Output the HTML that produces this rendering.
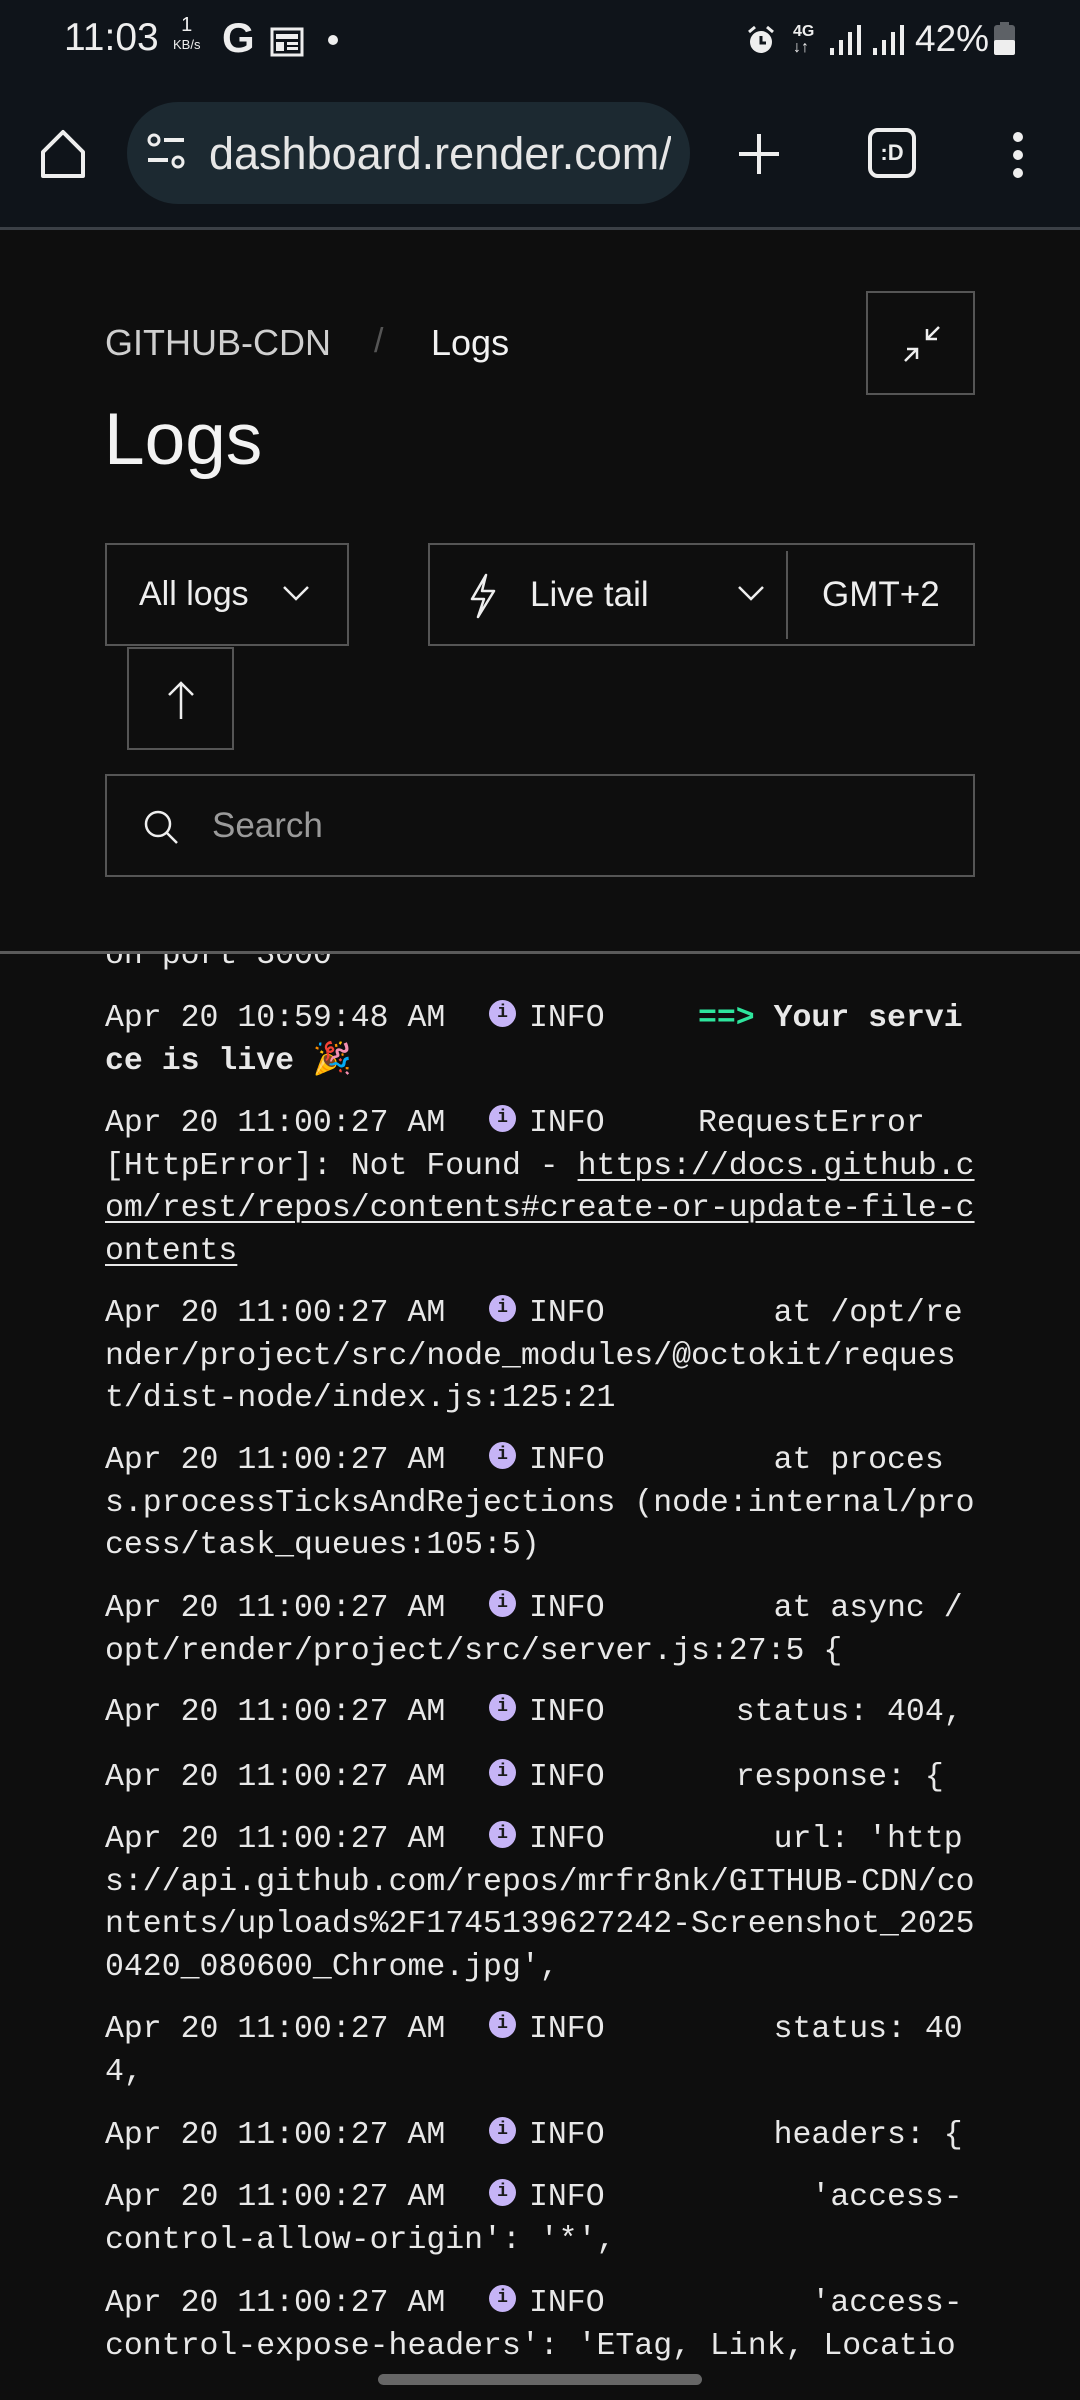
<!DOCTYPE html>
<html><head><meta charset="utf-8"><style>
*{margin:0;padding:0;box-sizing:border-box}
body{width:1080px;height:2400px;background:#0e0e0e;position:relative;overflow:hidden;font-family:"Liberation Sans",sans-serif;color:#eee}
.abs{position:absolute}
#top{position:absolute;left:0;top:0;width:1080px;height:228px;background:#0f141a}
#sep1{position:absolute;left:0;top:227px;width:1080px;height:3px;background:#3b4046}
#hdr{position:absolute;left:0;top:230px;width:1080px;height:722px;background:#0e0e0e;z-index:5}
#sep2{position:absolute;left:0;top:951px;width:1080px;height:3px;background:#5a5a5a;z-index:6}
.box{position:absolute;border:2px solid #555}
.l{position:absolute;font-family:"Liberation Mono",monospace;font-size:31.5px;line-height:42px;white-space:pre;color:#e8e8e8;height:42px}
.i{position:absolute;width:27px;height:27px;border-radius:50%;background:#c6b4f6;color:#1a1a1a;font:bold 18px/27px "Liberation Mono",monospace;text-align:center}
u{text-decoration:underline;text-underline-offset:5px;text-decoration-thickness:2px}
#logs{position:absolute;left:0;top:952px;width:1080px;height:1410px;overflow:hidden}
</style></head><body>
<div id="top">
 <div class="abs" style="left:64px;top:16px;font-size:39px;color:#eee">11:03</div>
 <div class="abs" style="left:173px;top:16px;font-size:20px;color:#eee;text-align:center;line-height:18px">1<br><span style="font-size:13px">KB/s</span></div>
 <div class="abs" style="left:222px;top:14px;font-size:42px;font-weight:bold;color:#eee">G</div>
 <svg class="abs" style="left:270px;top:25px" width="36" height="32"><rect x="2" y="4" width="30" height="26" fill="none" stroke="#eee" stroke-width="3"/><rect x="6" y="9" width="22" height="5" fill="#eee"/><rect x="6" y="17" width="8" height="9" fill="#eee"/><rect x="17" y="17" width="11" height="3" fill="#eee"/><rect x="17" y="22" width="11" height="3" fill="#eee"/></svg>
 <div class="abs" style="left:328px;top:35px;width:10px;height:10px;border-radius:50%;background:#eee"></div>
 <svg class="abs" style="left:746px;top:25px" width="32" height="32"><circle cx="15" cy="17" r="11" fill="#eee"/><path d="M15 11v7h5" stroke="#0f141a" stroke-width="3" fill="none"/><path d="M3 7l6-5M27 7l-6-5" stroke="#eee" stroke-width="3"/></svg>
 <div class="abs" style="left:793px;top:24px;font-size:16px;font-weight:bold;line-height:16px;color:#eee">4G<br>↓↑</div>
 <svg class="abs" style="left:828px;top:24px" width="80" height="32"><g fill="#eee"><rect x="2" y="24" width="4" height="7"/><rect x="11" y="16" width="4" height="15"/><rect x="20" y="8" width="4" height="23"/><rect x="29" y="1" width="4" height="30"/><rect x="45" y="24" width="4" height="7"/><rect x="54" y="16" width="4" height="15"/><rect x="63" y="8" width="4" height="23"/><rect x="72" y="1" width="4" height="30"/></g></svg>
 <div class="abs" style="left:915px;top:18px;font-size:37px;color:#eee">42%</div>
 <svg class="abs" style="left:993px;top:22px" width="24" height="34"><rect x="7" y="0" width="9" height="4" fill="#5d6166"/><rect x="1" y="3" width="21" height="30" rx="3" fill="#5d6166"/><rect x="1" y="18" width="21" height="15" rx="2" fill="#eee"/></svg>
 <svg class="abs" style="left:38px;top:128px" width="50" height="52"><path d="M5 24L25 4l20 20v24H5z" fill="none" stroke="#eee" stroke-width="4" stroke-linejoin="round"/></svg>
 <div class="abs" style="left:127px;top:102px;width:563px;height:102px;border-radius:51px;background:#1c2931"></div>
 <svg class="abs" style="left:146px;top:132px" width="44" height="44"><circle cx="8" cy="8" r="5" fill="none" stroke="#eee" stroke-width="3"/><rect x="18" y="6" width="20" height="4" fill="#eee"/><rect x="2" y="26" width="20" height="4" fill="#eee"/><circle cx="32" cy="30" r="5" fill="none" stroke="#eee" stroke-width="3"/></svg>
 <div class="abs" style="left:209px;top:128px;width:462px;overflow:hidden;white-space:nowrap;font-size:45px;color:#e6e6e6">dashboard.render.com/w</div>
 <svg class="abs" style="left:737px;top:132px" width="44" height="44"><path d="M22 2v40M2 22h40" stroke="#eee" stroke-width="4"/></svg>
 <div class="abs" style="left:868px;top:128px;width:48px;height:50px;border:4px solid #eee;border-radius:10px;font:bold 22px/42px 'Liberation Sans';text-align:center;color:#eee">:D</div>
 <svg class="abs" style="left:1008px;top:130px" width="20" height="50"><circle cx="10" cy="7" r="5" fill="#eee"/><circle cx="10" cy="25" r="5" fill="#eee"/><circle cx="10" cy="43" r="5" fill="#eee"/></svg>
</div>
<div id="sep1"></div>
<div id="hdr">
 <div class="abs" style="left:105px;top:92px;font-size:36px;color:#cfcfcf">GITHUB-CDN</div>
 <div class="abs" style="left:374px;top:92px;font-size:34px;color:#555">/</div>
 <div class="abs" style="left:431px;top:92px;font-size:36px;color:#f2f2f2">Logs</div>
 <div class="box" style="left:866px;top:61px;width:109px;height:104px"><svg style="position:absolute;left:33px;top:30px" width="42" height="42"><path d="M38 4L26 16M26 6v10h10M4 38l12-12M6 26h10v10" stroke="#eee" stroke-width="2.5" fill="none"/></svg></div>
 <div class="abs" style="left:104px;top:168px;font-size:73px;color:#f3f3f3">Logs</div>
 <div class="box" style="left:105px;top:313px;width:244px;height:103px"><div class="abs" style="left:32px;top:30px;font-size:34px;color:#eee">All logs</div><svg class="abs" style="left:174px;top:38px" width="30" height="20"><path d="M3 4l12 12L27 4" stroke="#eee" stroke-width="2.5" fill="none"/></svg></div>
 <div class="box" style="left:428px;top:313px;width:547px;height:103px"><svg class="abs" style="left:36px;top:28px" width="34" height="46"><path d="M20 2L6 26h12l-6 18 16-26H16z" stroke="#eee" stroke-width="2.5" fill="none" stroke-linejoin="round"/></svg><div class="abs" style="left:100px;top:30px;font-size:35px;color:#eee">Live tail</div><svg class="abs" style="left:306px;top:38px" width="30" height="20"><path d="M3 4l12 12L27 4" stroke="#eee" stroke-width="2.5" fill="none"/></svg><div class="abs" style="left:356px;top:6px;width:2px;height:88px;background:#555"></div><div class="abs" style="left:392px;top:30px;font-size:35px;color:#eee">GMT+2</div></div>
 <div class="box" style="left:127px;top:417px;width:107px;height:103px"><svg class="abs" style="left:36px;top:32px" width="32" height="40"><path d="M16 2v36M4 14L16 2l12 12" stroke="#eee" stroke-width="2.5" fill="none"/></svg></div>
 <div class="box" style="left:105px;top:544px;width:870px;height:103px"><svg class="abs" style="left:35px;top:32px" width="40" height="40"><circle cx="16" cy="16" r="12" fill="none" stroke="#eee" stroke-width="2.5"/><path d="M25 25l10 10" stroke="#eee" stroke-width="2.5"/></svg><div class="abs" style="left:105px;top:30px;font-size:35px;color:#9a9a9a">Search</div></div>
</div>
<div id="sep2"></div>
<div id="logs">
<div class="l" style="left:105px;top:-17px">on port 3000</div>
<div id="L"></div>
</div>
<div class="abs" style="left:378px;top:2374px;width:324px;height:11px;border-radius:6px;background:#666"></div>
<script>
var T="Apr 20 11:00:27 AM";
var E=[
[1016,"Apr 20 10:59:48 AM",'<span style="color:#2ee59d;font-weight:bold">==&gt;</span> <b>Your servi</b>',['<b>ce is live 🎉</b>']],
[1121,T,'RequestError',['[HttpError]: Not Found - <u>https://docs.github.c</u>','<u>om/rest/repos/contents#create-or-update-file-c</u>','<u>ontents</u>']],
[1311,T,'    at /opt/re',['nder/project/src/node_modules/@octokit/reques','t/dist-node/index.js:125:21']],
[1458,T,'    at proces',['s.processTicksAndRejections (node:internal/pro','cess/task_queues:105:5)']],
[1606,T,'    at async /',['opt/render/project/src/server.js:27:5 {']],
[1710,T,'  status: 404,',[]],
[1775,T,'  response: {',[]],
[1837,T,'    url: \'http',["s://api.github.com/repos/mrfr8nk/GITHUB-CDN/co","ntents/uploads%2F1745139627242-Screenshot_2025","0420_080600_Chrome.jpg',"]],
[2027,T,'    status: 40',['4,']],
[2133,T,'    headers: {',[]],
[2195,T,"      'access-",["control-allow-origin': '*',"]],
[2301,T,"      'access-",["control-expose-headers': 'ETag, Link, Locatio"]]
];
var h="";
E.forEach(function(e){
 var t=e[0]-952-18;
 h+='<div class="l" style="left:105px;top:'+t+'px">'+e[1]+'</div>';
 h+='<div class="i" style="left:489px;top:'+(t+2)+'px">i</div>';
 h+='<div class="l" style="left:529px;top:'+t+'px">INFO</div>';
 h+='<div class="l" style="left:698px;top:'+t+'px">'+e[2]+'</div>';
 e[3].forEach(function(s,k){h+='<div class="l" style="left:105px;top:'+(t+42.5*(k+1))+'px">'+s+'</div>';});
});
document.getElementById("L").outerHTML=h;
</script>
</body></html>
